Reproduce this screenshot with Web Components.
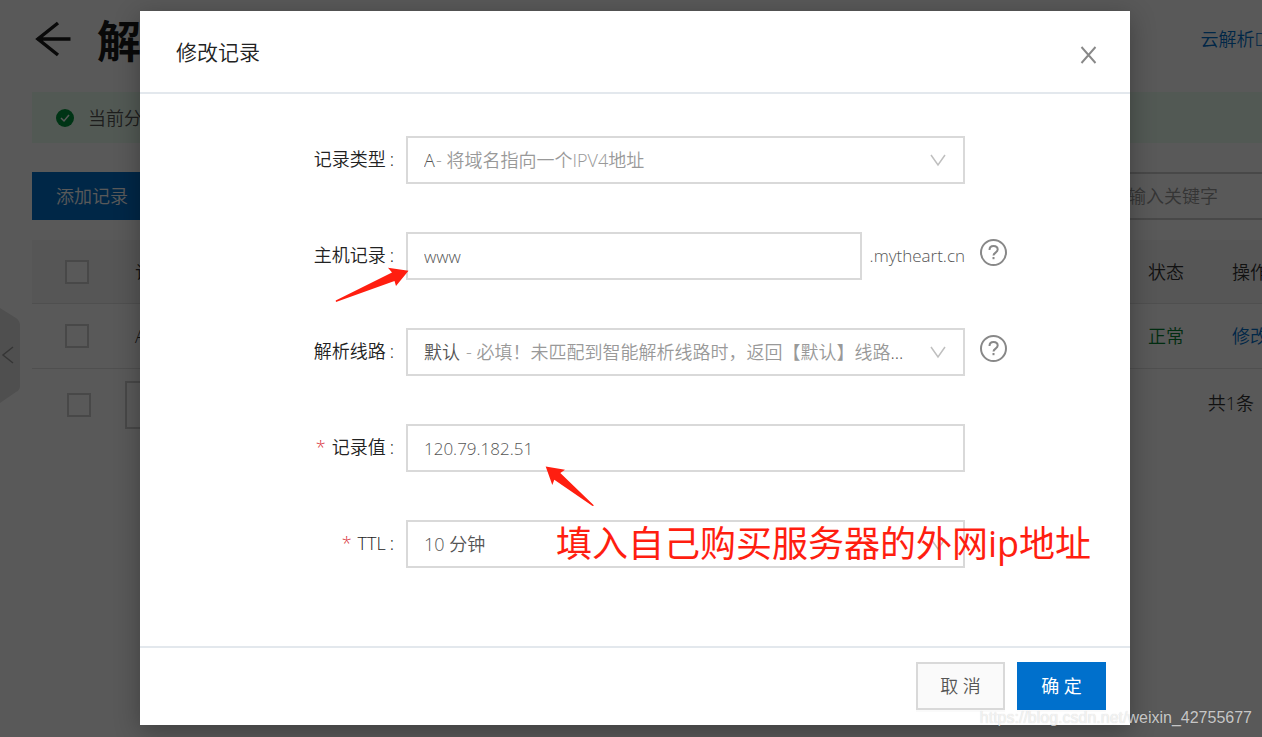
<!DOCTYPE html>
<html lang="zh-CN">
<head>
<meta charset="utf-8">
<meta name="viewport" content="width=device-width, initial-scale=1">
<title>修改记录</title>
<style>
  html, body { margin: 0; height: 100%; }
  body {
    font: 350 18px/24px "Open Sans", "Noto Sans CJK SC", sans-serif;
    color: #333;
    background: #fff;
    overflow: hidden;
  }
</style>
</head>
<body>
<dns-app></dns-app>

<script>
const define = (name, html, setup) => {
  const tpl = document.createElement('template');
  tpl.innerHTML = html;
  customElements.define(name, class extends HTMLElement {
    constructor() {
      super();
      this.attachShadow({ mode: 'open' }).append(tpl.content.cloneNode(true));
    }
    connectedCallback() { if (setup) setup(this, this.shadowRoot); }
  });
};

/* Square tick box used by the record table */
define('tick-box', `
<style>
  :host { display: block; }
  input { appearance: none; display: block; box-sizing: border-box; width: 24px; height: 24px; margin: 0; border: 2px solid #cfcfcf; background: #fff; }
  input:checked { background: #0070cc; }
</style>
<input type="checkbox" aria-label="选择">`);

/* The record list behind the dialog */
define('record-page', `
<style>
  :host { display: block; position: relative; padding-left: 32px; margin-right: -60px; white-space: nowrap; }
  a { color: #0070cc; text-decoration: none; }
  header { display: flex; align-items: center; justify-content: space-between; height: 78px; margin-bottom: 14px; padding-right: 32px; }
  .heading { display: flex; align-items: center; gap: 25px; }
  .back { display: block; width: 40px; height: 40px; padding: 0; border: 0; background: none; }
  .back svg { display: block; }
  h1 { margin: 0; font: 700 44px/60px "Noto Sans CJK SC", sans-serif; color: #1a1a1a; }
  .notice { display: flex; align-items: center; gap: 14px; height: 51px; padding-left: 24px; background: #ebfff0; color: #555; }
  .notice svg { flex: none; }
  .tools { display: flex; justify-content: space-between; margin: 29px 0 20px; }
  .add { width: 120px; height: 48px; border: 0; padding: 0; background: #0070cc; color: #fff; font: inherit; }
  .search { box-sizing: border-box; width: 214px; height: 48px; padding: 0 18px; border: 2px solid #cfcfcf; background: #fff; font: inherit; color: #555; }
  .search::placeholder { color: #999; opacity: 1; }
  table { width: 100%; table-layout: fixed; border-collapse: collapse; }
  th, td { height: 64px; padding: 0; text-align: left; font-weight: inherit; border-bottom: 1px solid #e3e3e3; }
  th { height: 63px; background: #f7f7f7; color: #333; }
  .pick { width: 70px; padding-left: 33px; }
  .state { width: 84px; }
  .act { width: 90px; }
  .ok { color: #00802f; }
  .foot { display: flex; align-items: center; gap: 34px; padding: 12px 68px 0 35px; }
  .foot select { appearance: none; width: 120px; height: 48px; border: 2px solid #cfcfcf; border-radius: 0; background: #fff; }
  .foot span { margin-left: auto; padding-bottom: 4px; }
  .fold { position: absolute; left: 0; top: 308px; width: 20px; height: 95px; padding: 0; border: 0; background: none; }
  .fold svg { display: block; }
</style>
<header>
  <div class="heading">
    <button class="back" aria-label="返回"><svg width="40" height="40" viewBox="0 0 40 40" fill="none" stroke="#1a1a1a" stroke-width="3.500"><path d="M38.500 20H5M26 4 6 20 26 36"/></svg></button>
    <h1>解</h1>
  </div>
  <a href="#dns">云解析DNS</a>
</header>
<div class="notice">
  <svg width="18" height="18" viewBox="0 0 18 18"><circle cx="9" cy="9" r="9" fill="#00963c"/><path d="m5 9 3 3 5-6" fill="none" stroke="#fff" stroke-width="1.500"/></svg>
  <span>当前分</span>
</div>
<div class="tools">
  <button class="add">添加记录</button>
  <input class="search" type="search" placeholder="输入关键字" aria-label="输入关键字">
</div>
<table>
  <thead><tr><th class="pick"><tick-box></tick-box></th><th>记</th><th class="state">状态</th><th class="act">操作</th></tr></thead>
  <tbody><tr><td class="pick"><tick-box></tick-box></td><td>A</td><td class="ok">正常</td><td><a href="#edit">修改</a></td></tr></tbody>
</table>
<div class="foot"><tick-box></tick-box><select aria-label="批量操作"></select><span>共1条</span></div>
<button class="fold" aria-label="收起"><svg width="20" height="95" viewBox="0 0 20 95"><path d="M0 0 16 10Q20 13 20 17V78Q20 82 16 84L0 95Z" fill="#e2e2e2"/><path d="M13 39 3 47l10 8" fill="none" stroke="#999" stroke-width="1.500"/></svg></button>`);

/* One labelled row of the form: kind="select" or kind="text" */
define('form-field', `
<style>
  :host { display: grid; grid-template-columns: 254px minmax(0, 1fr) 28px; position: relative; }
  .label { height: 48px; line-height: 46px; text-align: right; color: #222; white-space: nowrap; }
  .star { color: #d9363e; margin-right: 6px; }
  .star:not(.on) { display: none; }
  .colon { margin-left: 4px; }
  .control { display: flex; align-items: center; margin: 0 15px 0 12px; }
  .box { flex: 1; min-width: 0; display: grid; align-items: center; }
  .box > * { grid-area: 1 / 1; }
  input, select { appearance: none; box-sizing: border-box; width: 100%; height: 48px; margin: 0; padding: 0 16px; border: 2px solid #d9d9d9; border-radius: 0; background: #fff; color: #555; font: inherit; outline: 0; }
  input { font-size: 17px; }
  .hint { padding-left: var(--lead, 32px); color: #999; pointer-events: none; white-space: nowrap; }
  .arrow { justify-self: end; margin-right: 19px; pointer-events: none; }
  .help { width: 28px; height: 28px; margin-top: 6px; padding: 0; border: 0; background: none; }
  .help svg { display: block; }
</style>
<label class="label" for="c"><span class="star">*</span><span class="text"></span><span class="colon">:</span></label>
<div class="control"><div class="box"></div><slot name="suffix"></slot></div>
<div class="aside"></div>
<slot name="note"></slot>`, (host, root) => {
  const label = host.getAttribute('label');
  const value = host.getAttribute('value');
  const box = root.querySelector('.box');
  root.querySelector('.text').textContent = label;
  root.querySelector('.star').classList.toggle('on', host.hasAttribute('required'));
  if (host.getAttribute('kind') === 'select') {
    box.innerHTML = `<select id="c"><option>${value}</option></select><span class="hint"><slot></slot></span>
      <svg class="arrow" width="16" height="14" viewBox="0 0 16 14" fill="none" stroke="#bfbfbf" stroke-width="1.500"><path d="m1 2 7 10 7-10"/></svg>`;
  } else {
    box.innerHTML = `<input id="c" type="text" value="${value}">`;
  }
  if (host.hasAttribute('help')) {
    root.querySelector('.aside').innerHTML = `<button class="help" type="button" aria-label="帮助"><svg width="28" height="28" viewBox="0 0 28 28" fill="none" stroke="#888" stroke-width="2"><circle cx="13.500" cy="14.500" r="12.500"/><path d="M9.500 12C9.500 9.400 11 8 13.500 8s4.200 1.400 4.200 3.600c0 3-4.200 3-4.200 6"/><path d="M13.500 19v2.200"/></svg></button>`;
  }
});

/* Dialog frame with title, body and footer */
define('modal-dialog', `
<style>
  :host { display: block; background: #fff; box-shadow: 0 6px 24px rgba(0, 0, 0, .3); }
  header { display: flex; align-items: center; justify-content: space-between; height: 81px; padding: 0 32px 0 36px; border-bottom: 2px solid #e3e8ed; }
  h2 { margin: 0; font: inherit; font-size: 21px; color: #222; }
  .close { width: 20px; height: 20px; padding: 0; margin-top: 6px; border: 0; background: none; }
  .close svg { display: block; }
  .body { display: flex; flex-direction: column; gap: 48px; padding: 42px 122px 78px 0; }
  footer { display: flex; justify-content: flex-end; gap: 12px; padding: 14px 24px 15px; border-top: 2px solid #e3e8ed; }
</style>
<header><h2><slot name="title"></slot></h2>
  <button class="close" aria-label="关闭"><svg width="20" height="20" viewBox="0 0 20 20" fill="none" stroke="#888" stroke-width="1.900"><path d="m3.500 2 14 16M17.500 2l-14 16"/></svg></button></header>
<div class="body"><slot></slot></div>
<footer><slot name="footer"></slot></footer>`);

define('action-button', `
<style>
  :host { display: block; }
  button { box-sizing: border-box; width: 89px; height: 48px; padding: 0; border: 2px solid #d9d9d9; background: #fafafa; color: #555; font: inherit; box-shadow: 0 2px 0 rgba(0, 0, 0, .02); }
  :host([primary]) button { border-color: #0070cc; background: #0070cc; color: #fff; font-weight: 400; }
</style>
<button type="button"><slot></slot></button>`);

define('dns-app', `
<style>
  :host { display: block; position: relative; height: 100%; overflow: hidden; }
  .scrim { position: absolute; inset: 0; display: flex; align-items: flex-start; padding: 11px 132px 0 140px; background: rgba(0, 0, 0, .65); }
  modal-dialog { flex: 1; min-width: 0; }
  .type { --lead: 30px; }
  .line { --lead: 60px; }
  .dark { color: #555; }
  .domain { margin-left: 8px; font-size: 17px; color: #555; }
  .mark { position: absolute; fill: #ff1e10; }
  .to-host { left: 194px; top: 34px; }
  .to-value { left: 404px; top: 41px; }
  .remark { position: absolute; left: 416px; top: 0; font-size: 36px; line-height: 48px; font-weight: 400; color: #ff1e10; white-space: nowrap; }
  .watermark { position: absolute; right: 10px; bottom: 9px; font: 400 16px/20px "Liberation Sans", sans-serif; color: rgba(255, 255, 255, .7); text-shadow: 0 0 1px rgba(0, 0, 0, .2); }
</style>
<record-page></record-page>
<div class="scrim">
  <modal-dialog role="dialog" aria-modal="true">
    <span slot="title">修改记录</span>
    <form-field class="type" kind="select" label="记录类型" value="A">- 将域名指向一个IPV4地址</form-field>
    <form-field kind="text" label="主机记录" value="www" help>
      <span class="domain" slot="suffix">.mytheart.cn</span>
      <svg class="mark to-host" slot="note" width="76" height="38" viewBox="334 266 76 38"><path d="M336 302 335.700 300.500 392 272.500 388 267.700 408.500 270.700 396 286 394.500 281Z"/></svg>
    </form-field>
    <form-field class="line" kind="select" label="解析线路" value="默认" help>- 必填！未匹配到智能解析线路时，返回【默认】线路<span class="dark">...</span></form-field>
    <form-field kind="text" label="记录值" value="120.79.182.51" required>
      <svg class="mark to-value" slot="note" width="52" height="42" viewBox="544 465 52 42"><path d="M545.700 466.500 565 469.700 560.300 473 594 505.500 592.500 506 554.300 479.700 552.300 485Z"/></svg>
    </form-field>
    <form-field kind="select" label="TTL" value="10 分钟" required><span class="remark" slot="note">填入自己购买服务器的外网ip地址</span></form-field>
    <action-button slot="footer">取 消</action-button>
    <action-button slot="footer" primary>确 定</action-button>
  </modal-dialog>
</div>
<div class="watermark">https://blog.csdn.net/weixin_42755677</div>`);
</script>
</body>
</html>
